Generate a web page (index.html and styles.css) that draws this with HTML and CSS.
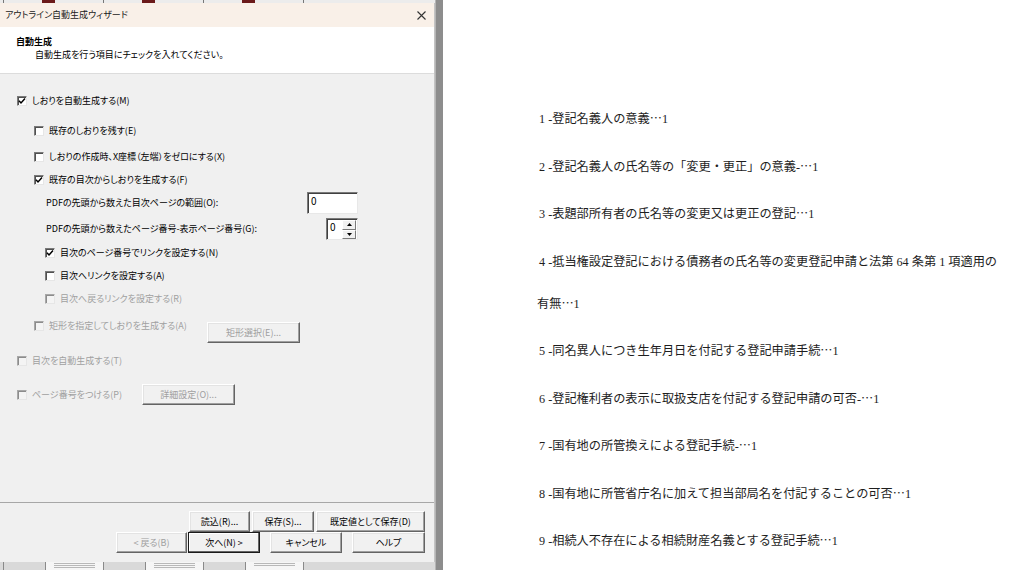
FILE: index.html
```html
<!DOCTYPE html>
<html lang="ja">
<head>
<meta charset="utf-8">
<title>アウトライン自動生成ウィザード</title>
<link rel="stylesheet" href="styles.css">
</head>
<body>
<div class="screen">
  <div class="left">
    <div class="strip strip-top">
      <span class="seg gap3"></span><span class="seg line"></span>
      <span class="seg w39"></span><span class="seg red"></span><span class="seg w47"></span><span class="seg line"></span>
      <span class="seg w39"></span><span class="seg red"></span><span class="seg w47"></span><span class="seg line"></span>
      <span class="seg w39"></span><span class="seg red"></span><span class="seg w47"></span><span class="seg line"></span>
    </div>
    <div class="dialog">
      <div class="titlebar">
        <span class="title">アウトライン自動生成ウィザード</span>
        <svg class="close" width="9" height="9" viewBox="0 0 9 9"><path d="M0.5 0.5L8.5 8.5M8.5 0.5L0.5 8.5" stroke="#333" stroke-width="1.1" fill="none"/></svg>
      </div>
      <div class="header">
        <div class="h-title">自動生成</div>
        <div class="h-sub">自動生成を行う項目にチェックを入れてください。</div>
      </div>
      <div class="body">
        <div class="row lv1 r1">
          <span class="cb on"><svg viewBox="0 0 10 10"><path d="M2 4.8L4 7L8 2.5" stroke="#000" stroke-width="1.5" fill="none"/></svg></span>
          <span class="lbl">しおりを自動生成する(M)</span>
        </div>
        <div class="row lv2 r2">
          <span class="cb"></span><span class="lbl">既存のしおりを残す(E)</span>
        </div>
        <div class="row lv2 r3">
          <span class="cb"></span><span class="lbl">しおりの作成時、X座標（左端）をゼロにする(X)</span>
        </div>
        <div class="row lv2 r4">
          <span class="cb on"><svg viewBox="0 0 10 10"><path d="M2 4.8L4 7L8 2.5" stroke="#000" stroke-width="1.5" fill="none"/></svg></span>
          <span class="lbl">既存の目次からしおりを生成する(F)</span>
        </div>
        <div class="row field r5">
          <span class="lbl">PDFの先頭から数えた目次ページの範囲(O):</span>
          <span class="input">0</span>
        </div>
        <div class="row field r6">
          <span class="lbl">PDFの先頭から数えたページ番号-表示ページ番号(G):</span>
          <span class="spin">
            <span class="spin-val">0</span>
            <span class="spin-btns">
              <span class="spin-btn"><svg width="5" height="3" viewBox="0 0 5 3"><path d="M0 3L2.5 0L5 3Z" fill="#000"/></svg></span>
              <span class="spin-btn"><svg width="5" height="3" viewBox="0 0 5 3"><path d="M0 0L2.5 3L5 0Z" fill="#000"/></svg></span>
            </span>
          </span>
        </div>
        <div class="row lv3 r7">
          <span class="cb on"><svg viewBox="0 0 10 10"><path d="M2 4.8L4 7L8 2.5" stroke="#000" stroke-width="1.5" fill="none"/></svg></span>
          <span class="lbl">目次のページ番号でリンクを設定する(N)</span>
        </div>
        <div class="row lv3 r8">
          <span class="cb"></span><span class="lbl">目次へリンクを設定する(A)</span>
        </div>
        <div class="row lv3 r9 disabled">
          <span class="cb"></span><span class="lbl">目次へ戻るリンクを設定する(R)</span>
        </div>
        <div class="row lv2 r10 disabled with-btn">
          <span class="lblwrap w-rect"><span class="cb"></span><span class="lbl">矩形を指定してしおりを生成する(A)</span></span>
          <span class="btn rect-btn">矩形選択(E)...</span>
        </div>
        <div class="row lv1 r11 disabled">
          <span class="cb"></span><span class="lbl">目次を自動生成する(T)</span>
        </div>
        <div class="row lv1 r12 disabled">
          <span class="lblwrap w-page"><span class="cb"></span><span class="lbl">ページ番号をつける(P)</span></span>
          <span class="btn detail-btn">詳細設定(O)...</span>
        </div>
      </div>
      <div class="footer">
        <div class="btn-row top-row">
          <span class="btn w61">読込(R)...</span>
          <span class="btn w62">保存(S)...</span>
          <span class="btn w109">既定値として保存(D)</span>
        </div>
        <div class="btn-row bottom-row">
          <span class="btn w71 dis">&lt; 戻る(B)</span>
          <span class="btn w72 default">次へ(N) &gt;</span>
          <span class="btn w72 sp">キャンセル</span>
          <span class="btn w73 sp">ヘルプ</span>
        </div>
      </div>
    </div>
    <div class="strip strip-bottom">
      <span class="cell g3"></span>
      <span class="cell c42"></span>
      <span class="cell page"><i></i><i></i><i></i></span>
      <span class="cell c42"></span>
      <span class="cell page"><i></i><i></i><i></i></span>
      <span class="cell c42"></span>
      <span class="cell page"><i></i><i></i></span>
      <span class="cell rest"></span>
    </div>
  </div>
  <div class="divider"></div>
  <div class="doc">
    <p>1 -登記名義人の意義<span class="el">…</span>1</p>
    <p>2 -登記名義人の氏名等の「変更・更正」の意義-<span class="el">…</span>1</p>
    <p>3 -表題部所有者の氏名等の変更又は更正の登記<span class="el">…</span>1</p>
    <p class="two">4 -抵当権設定登記における債務者の氏名等の変更登記申請と法第 64 条第 1 項適用の<br><span class="wrap">有無<span class="el">…</span>1</span></p>
    <p>5 -同名異人につき生年月日を付記する登記申請手続<span class="el">…</span>1</p>
    <p>6 -登記権利者の表示に取扱支店を付記する登記申請の可否-<span class="el">…</span>1</p>
    <p>7 -国有地の所管換えによる登記手続-<span class="el">…</span>1</p>
    <p>8 -国有地に所管省庁名に加えて担当部局名を付記することの可否<span class="el">…</span>1</p>
    <p>9 -相続人不存在による相続財産名義とする登記手続<span class="el">…</span>1</p>
  </div>
</div>
</body>
</html>
```

FILE: styles.css
```css
* { box-sizing: border-box; }

html, body {
  margin: 0;
  padding: 0;
}

body {
  width: 1024px;
  height: 570px;
  overflow: hidden;
  background: #ffffff;
  font-family: "Noto Sans CJK JP", "Noto Sans", sans-serif;
}

.screen {
  display: flex;
  height: 570px;
}

/* ---------- left column (thumbnail pane with dialog over it) ---------- */
.left {
  width: 435px;
  flex: none;
  display: flex;
  flex-direction: column;
  background: #d6d6d6;
}

.strip {
  display: flex;
  flex: none;
}

.strip-top {
  height: 3px;
  background: #ececec;
}

.strip-top .seg { display: block; height: 3px; }
.strip-top .gap3 { width: 3px; }
.strip-top .line { width: 1px; background: #777; }
.strip-top .w39 { width: 38px; }
.strip-top .w47 { width: 48px; }
.strip-top .red { width: 13px; background: #6b1a1a; }

.strip-bottom {
  height: 8px;
  background: #d9d9d9;
}

.strip-bottom .cell {
  display: block;
  height: 8px;
  border-left: 1px solid #8a8a8a;
}

.strip-bottom .g3 { width: 3px; border-left: none; }
.strip-bottom .c42 { width: 42px; }
.strip-bottom .page {
  width: 58px;
  background: #f6f6f6;
  display: flex;
  flex-direction: column;
  padding: 1px 8px 0 8px;
  gap: 1px;
}
.strip-bottom .page i {
  display: block;
  height: 1px;
  background: #b8b8b8;
}
.strip-bottom .rest { flex: 1; }

/* ---------- dialog ---------- */
.dialog {
  flex: 1;
  display: flex;
  flex-direction: column;
  background: #f0f0f0;
  font-size: 9px;
  font-feature-settings: "palt";
  color: #000;
  border-right: 1px solid #c4c4c4;
}

.titlebar {
  height: 24px;
  flex: none;
  background: #f9f0e8;
  display: flex;
  align-items: center;
  justify-content: space-between;
  padding: 0 8px 0 5px;
  color: #1a1a1a;
}

.title {
  font-size: 9px;
  line-height: 12px;
}

.close { display: block; }

.header {
  height: 47px;
  flex: none;
  background: #ffffff;
  border-bottom: 1px solid #dcdcdc;
  padding: 8px 0 0 16px;
  line-height: 13px;
}

.h-title { font-weight: bold; }
.h-sub { padding-left: 19px; }

.body {
  flex: 1;
  padding-top: 17px;
}

.row {
  display: flex;
  align-items: center;
  height: 20px;
  margin-top: 3px;
  line-height: 12px;
}

.lv1 { padding-left: 17px; }
.lv2 { padding-left: 34px; }
.lv3 { padding-left: 45px; }

.r1 { margin-top: 0; }
.r2 { margin-top: 10px; }
.r3 { margin-top: 6px; }
.r4 { margin-top: 3px; }
.r5 { margin-top: 2px; height: 22px; }
.r6 { margin-top: 4px; height: 22px; }
.r7 { margin-top: 3px; }
.r8 { margin-top: 3px; }
.r9 { margin-top: 3px; }
.r10 { margin-top: 7px; height: 27px; align-items: flex-start; }
.r11 { margin-top: 8px; }
.r12 { margin-top: 13px; height: 21px; }

.disabled { color: #a0a0a0; }

.cb {
  width: 10px;
  height: 10px;
  flex: none;
  background: #ffffff;
  border-top: 1px solid #7a7a7a;
  border-left: 1px solid #7a7a7a;
  border-right: 1px solid #e6e6e6;
  border-bottom: 1px solid #e6e6e6;
  box-shadow: inset 1px 1px 0 #505050;
  margin-right: 5px;
  position: relative;
}

.cb svg {
  position: absolute;
  left: -1px;
  top: -1px;
  width: 10px;
  height: 10px;
}

.disabled .cb {
  background: #f4f4f4;
  border-top-color: #a8a8a8;
  border-left-color: #a8a8a8;
  box-shadow: inset 1px 1px 0 #8c8c8c;
}

.lblwrap {
  display: flex;
  align-items: center;
  height: 20px;
  flex: none;
}

.w-rect { width: 173px; }
.w-page { width: 125px; }

.field {
  padding-left: 46px;
  width: 358px;
  justify-content: space-between;
}

.input {
  width: 51px;
  height: 22px;
  background: #ffffff;
  border-top: 1px solid #7a7a7a;
  border-left: 1px solid #7a7a7a;
  border-right: 1px solid #e8e8e8;
  border-bottom: 1px solid #e8e8e8;
  box-shadow: inset 1px 1px 0 #404040;
  padding: 2px 0 0 3px;
  line-height: 12px;
  font-size: 10px;
}

.spin {
  width: 32px;
  height: 22px;
  display: flex;
  background: #ffffff;
  border-top: 1px solid #7a7a7a;
  border-left: 1px solid #7a7a7a;
  border-right: 1px solid #e8e8e8;
  border-bottom: 1px solid #e8e8e8;
  box-shadow: inset 1px 1px 0 #404040;
}

.spin-val {
  flex: 1;
  padding: 2px 0 0 3px;
  line-height: 12px;
  font-size: 10px;
}

.spin-btns {
  width: 15px;
  display: flex;
  flex-direction: column;
  padding: 1px 1px 0 0;
}

.spin-btn {
  flex: 1;
  display: flex;
  align-items: center;
  justify-content: center;
  background: #f0f0f0;
  border-top: 1px solid #ffffff;
  border-left: 1px solid #ffffff;
  border-right: 1px solid #7a7a7a;
  border-bottom: 1px solid #7a7a7a;
}

.spin-btn svg { display: block; }

/* ---------- buttons ---------- */
.btn {
  display: flex;
  align-items: center;
  justify-content: center;
  height: 21px;
  flex: none;
  background: #f1f1f1;
  border-top: 1px solid #ffffff;
  border-left: 1px solid #ffffff;
  border-right: 1px solid #646464;
  border-bottom: 1px solid #646464;
  box-shadow: inset -1px -1px 0 #a0a0a0, inset 1px 1px 0 #e3e3e3;
  color: #000;
  line-height: 12px;
  white-space: nowrap;
}

.rect-btn {
  width: 93px;
  margin-top: 6px;
}

.detail-btn { width: 93px; }

.disabled .btn,
.btn.dis { color: #a0a0a0; }

.btn.default {
  border: 1px solid #1a1a1a;
  box-shadow: inset -1px -1px 0 #646464, inset 1px 1px 0 #ffffff;
}

.w61 { width: 61px; }
.w62 { width: 62px; }
.w71 { width: 71px; }
.w72 { width: 72px; }
.w73 { width: 73px; }
.w109 { width: 109px; }

.footer {
  height: 60px;
  flex: none;
  border-top: 1px solid #a7a7a7;
  padding-top: 8px;
}

.btn-row {
  display: flex;
  justify-content: flex-end;
  padding-right: 9px;
  gap: 2px;
}

.bottom-row { gap: 1px; }
.bottom-row .sp { margin-left: 9px; }

/* ---------- divider & document ---------- */
.divider {
  width: 8px;
  flex: none;
  background: #8d8d8d;
  border-left: 1px solid #b5b5b5;
}

.doc {
  flex: 1;
  background: #ffffff;
  padding: 98px 0 0 96px;
  font-family: "Liberation Serif", "Noto Sans CJK JP", serif;
  font-size: 12.2px;
  color: #1e1e1e;
}

.doc p {
  margin: 0 0 5.5px 0;
  height: 42px;
  line-height: 42px;
  white-space: nowrap;
}

.doc p.two { height: 84px; }

.doc .el {
  font-family: "Noto Sans CJK JP", sans-serif;
  line-height: 0;
}

.doc .wrap { margin-left: -2px; }
```
